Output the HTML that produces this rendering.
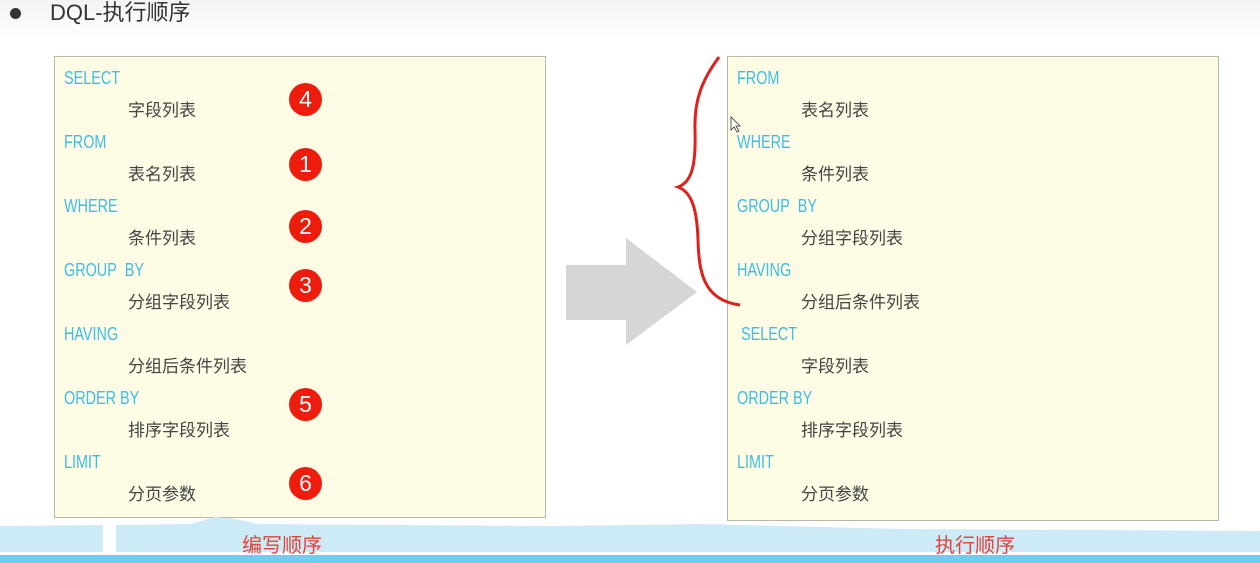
<!DOCTYPE html>
<html><head><meta charset="utf-8"><style>
body{margin:0;width:1260px;height:563px;background:#fff;position:relative;overflow:hidden;font-family:"Liberation Sans","Noto Sans CJK SC",sans-serif}
.box{position:absolute;background:#fefce4;border:1px solid #b9b7a8}
.t{position:absolute;white-space:nowrap;line-height:20px}
.k{color:#3cbde6;font-size:18px;transform:scaleX(0.8);transform-origin:left;margin-top:0px}
.c{color:#444;font-size:17px;margin-top:1px}
.n{position:absolute;width:33px;height:33px;border-radius:50%;background:#ee1c0c;color:#fff;font-size:23px;text-align:center;line-height:33px}
</style></head><body>
<div style="position:absolute;left:0;top:0;width:1260px;height:40px;background:linear-gradient(#f4f4f4,#fff)"></div>
<div style="position:absolute;left:10px;top:8px;width:11px;height:11px;border-radius:50%;background:#333"></div>
<div class="t" style="left:50px;top:0px;font-size:22px;color:#333;line-height:26px">DQL-执行顺序</div>

<div class="box" style="left:54px;top:56px;width:490px;height:460px"></div>
<div class="box" style="left:727px;top:56px;width:490px;height:463px"></div>

<div class="t k" style="left:64px;top:68px">SELECT</div>
<div class="t c" style="left:128px;top:100px">字段列表</div>
<div class="t k" style="left:64px;top:132px">FROM</div>
<div class="t c" style="left:128px;top:164px">表名列表</div>
<div class="t k" style="left:64px;top:196px">WHERE</div>
<div class="t c" style="left:128px;top:228px">条件列表</div>
<div class="t k" style="left:64px;top:260px">GROUP&nbsp; BY</div>
<div class="t c" style="left:128px;top:292px">分组字段列表</div>
<div class="t k" style="left:64px;top:324px">HAVING</div>
<div class="t c" style="left:128px;top:356px">分组后条件列表</div>
<div class="t k" style="left:64px;top:388px">ORDER BY</div>
<div class="t c" style="left:128px;top:420px">排序字段列表</div>
<div class="t k" style="left:64px;top:452px">LIMIT</div>
<div class="t c" style="left:128px;top:484px">分页参数</div>

<div class="n" style="left:289px;top:83px">4</div>
<div class="n" style="left:289px;top:148px">1</div>
<div class="n" style="left:289px;top:210px">2</div>
<div class="n" style="left:289px;top:269px">3</div>
<div class="n" style="left:289px;top:388px">5</div>
<div class="n" style="left:289px;top:467px">6</div>

<div class="t k" style="left:737px;top:68px">FROM</div>
<div class="t c" style="left:801px;top:100px">表名列表</div>
<div class="t k" style="left:737px;top:132px">WHERE</div>
<div class="t c" style="left:801px;top:164px">条件列表</div>
<div class="t k" style="left:737px;top:196px">GROUP&nbsp; BY</div>
<div class="t c" style="left:801px;top:228px">分组字段列表</div>
<div class="t k" style="left:737px;top:260px">HAVING</div>
<div class="t c" style="left:801px;top:292px">分组后条件列表</div>
<div class="t k" style="left:741px;top:324px">SELECT</div>
<div class="t c" style="left:801px;top:356px">字段列表</div>
<div class="t k" style="left:737px;top:388px">ORDER BY</div>
<div class="t c" style="left:801px;top:420px">排序字段列表</div>
<div class="t k" style="left:737px;top:452px">LIMIT</div>
<div class="t c" style="left:801px;top:484px">分页参数</div>

<svg style="position:absolute;left:0;top:0" width="1260" height="563">
<polygon points="566,265 626,265 626,238 697,292 626,345 626,320 566,320" fill="#d6d6d6"/>
<path d="M719,57 C702,80 694,100 695,130 C696,165 692,182 678,187 C692,192 697,210 698,240 C699,270 702,300 740,305" fill="none" stroke="#e0201c" stroke-width="3"/>
<path d="M731,117 l0,13 l3,-3 l3,5 l2,-1 l-3,-5 l4,0 z" fill="#fff" stroke="#333" stroke-width="0.8"/>
<path d="M0,526 L103,525 L103,552 L0,552 Z" fill="#cdebf7"/>
<path d="M116,525 L190,524 L215,517 L235,519 L260,524 L400,525 L550,526 L700,524 L900,529 L1100,530 L1260,531 L1260,552 L116,552 Z" fill="#cdebf7"/>
<rect x="0" y="555" width="1260" height="8" fill="#6ccff2"/>
</svg>
<div class="t" style="left:242px;top:535px;color:#e0443a;font-size:20px;line-height:22px">编写顺序</div>
<div class="t" style="left:935px;top:535px;color:#e0443a;font-size:20px;line-height:22px">执行顺序</div>
</body></html>
